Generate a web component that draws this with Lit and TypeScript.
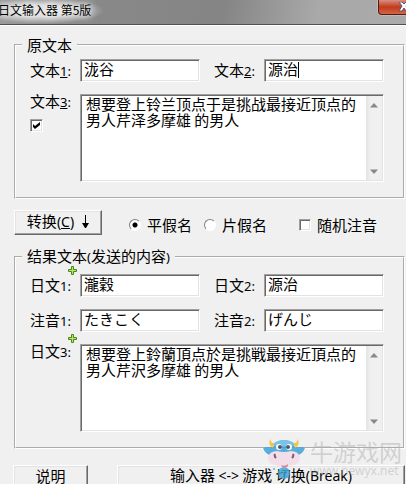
import { LitElement, html, css, svg, nothing } from "lit";
import { customElement, property } from "lit/decorators.js";

const CJK = css`"Noto Sans CJK SC", sans-serif`;

const controls = css`
  * { box-sizing: border-box; }
  .latin { font-family: "Noto Sans", ${CJK}; font-size: 13px; }
  .sunken {
    border: 1px solid;
    border-color: #a0a0a0 #fff #fff #a0a0a0;
    background: #fff;
    box-shadow: inset 1px 1px 0 #696969, inset -1px -1px 0 #e3e3e3;
  }
`;

@customElement("text-field")
class TextField extends LitElement {
  @property() name = "";
  @property() num = "";
  @property() value = "";
  @property({ type: Boolean }) access = false;
  @property({ type: Boolean }) plus = false;
  @property({ type: Boolean }) caret = false;
  @property({ type: Boolean }) multi = false;
  @property({ type: Boolean }) check = false;

  static styles = [controls, css`
    :host { display: flex; flex: 1; min-width: 0; align-items: flex-start; }
    .side { position: relative; width: 50px; flex: none; }
    label { display: block; line-height: 22px; white-space: nowrap; }
    .multi label { line-height: 14px; }
    .plus { position: absolute; left: 38px; top: -8px; width: 9px; height: 9px; }
    .multi .plus { top: -10px; }
    .box { position: relative; display: flex; flex: 1; min-width: 0; height: 23px; padding: 1px; }
    .box.tall { height: 88px; }
    input[type="text"], textarea {
      flex: 1; min-width: 0; width: 100%; margin: 0; border: 0; outline: 0; resize: none;
      background: transparent; color: #000; font: 15px/16px ${CJK};
    }
    input[type="text"] { padding: 0 2px; height: 16px; }
    textarea { padding: 0 4px; overflow: hidden; }
    .caret { position: absolute; left: 33px; top: 2px; width: 1px; height: 16px; background: #000; }
    .bar {
      display: flex; flex-direction: column; justify-content: space-between; align-items: center;
      width: 16px; padding: 7px 0 6px; background: linear-gradient(90deg, #e4e4e4, #f0f0f0 30%);
    }
    .arrow { display: block; width: 8px; height: 5px; }
    .check { appearance: none; display: block; width: 13px; height: 13px; margin: 10px 0 0; }
    .checkwrap { position: relative; display: block; }
    .tick { position: absolute; left: 3px; top: 3px; width: 7px; height: 7px; pointer-events: none; }
  `];

  render() {
    const text = html`${this.name}<span class="latin">${this.access ? html`<u>${this.num}</u>` : this.num}:</span>`;
    return html`
      <div class="side ${this.multi ? "multi" : ""}">
        <label for="value">${text}</label>
        ${this.plus ? html`<svg class="plus" viewBox="0 0 9 9"><path d="M3.5.5h2v3h3v2h-3v3h-2v-3h-3v-2h3z" fill="#b9e070" stroke="#498b12"/></svg>` : nothing}
        ${this.check ? html`<span class="checkwrap">
          <input class="check sunken" type="checkbox" aria-label="文本3" checked>
          <svg class="tick" viewBox="0 0 7 7"><path d="M0 2l2 2 5-4v3L2 7 0 5z"/></svg></span>` : nothing}
      </div>
      <div class="box sunken ${this.multi ? "tall" : ""}">
        ${this.multi
          ? html`<textarea id="value" .value=${this.value} spellcheck="false"></textarea>
            <div class="bar">
              <svg class="arrow" viewBox="0 0 8 5"><path d="M0 4.500L4 0l4 4.500z" fill="#888"/></svg>
              <svg class="arrow" viewBox="0 0 8 5"><path d="M0 .5h8L4 5z" fill="#888"/></svg>
            </div>`
          : html`<input id="value" type="text" .value=${this.value} spellcheck="false">`}
        ${this.caret ? html`<span class="caret"></span>` : nothing}
      </div>`;
  }
}

@customElement("site-mark")
class SiteMark extends LitElement {
  static styles = css`
    :host { display: flex; gap: 4px; pointer-events: none; }
    .cow { width: 44px; height: 42px; flex: none; opacity: .85; }
    .words { display: flex; flex-direction: column; font-family: ${CJK}; color: #b0b0b080; white-space: nowrap; }
    .name { font-size: 23px; line-height: 26px; }
    .url { font: 12px/14px "Noto Sans", sans-serif; }
  `;
  render() {
    return html`
      <svg class="cow" viewBox="0 0 44 42" aria-hidden="true">${svg`
        <path d="M8 1q1 4 5 5l-3 4Q6 6 8 1zM36 1q-1 4-5 5l3 4Q38 6 36 1z" fill="#f6c21c"/>
        <path d="M1 10q6-2 10 0Q14 2 22 2t11 8q5-2 10 0-3 8-10 7H11Q4 18 1 10z" fill="#3ba3db"/>
        <path d="M11 6q4-4 11-4t11 4q-5 4-11 2-6 2-11-2z" fill="#65bce6"/>
        <circle cx="17" cy="9" r="3" fill="#fff"/><circle cx="27" cy="9" r="3" fill="#fff"/>
        <circle cx="18" cy="9" r="2" fill="#354354"/><circle cx="26" cy="9" r="2" fill="#354354"/>
        <path d="M6 19q2-6 9-6 7 2 14 0 7 0 9 6 1 9-16 9T6 19z" fill="#f3dce8"/>
        <path d="M13 16q-1 2 1 4M31 16q1 2-1 4" fill="none" stroke="#684554" stroke-width="2"/>
        <path d="M19 27q4 2 7-1 0 4-3 3-3 1-4-2z" fill="#e96487"/>
        <circle cx="22" cy="35" r="6" fill="#43a5d8"/><circle cx="12" cy="31" r="1" fill="#43a5d8"/>
        <path d="M19 34q3 2 6 0M22 35v4" fill="none" stroke="#287eae"/>
      `}</svg>
      <div class="words"><span class="name">牛游戏网</span><span class="url">www.newyx.net</span></div>`;
  }
}

@customElement("app-root")
class AppRoot extends LitElement {
  static styles = [controls, css`
    :host {
      display: block; position: relative; height: 100vh; overflow: hidden;
      background: #f0f0f0; color: #000; font: 15px/16px ${CJK};
    }
    .title {
      display: flex; justify-content: space-between; height: 25px; overflow: hidden;
      border-bottom: 1px solid #505050; box-shadow: 0 1px #fff;
      background: linear-gradient(100deg, #999 0, #888 25%, #858585 55%, #a9a9a9 78%, #aaa);
    }
    h1 {
      margin: 0 0 0 -2px; padding: 0 14px 0 0; font: 12px/19px ${CJK}; white-space: nowrap;
      background: radial-gradient(ellipse at 42% 45%, #fffa 30%, #fff0 70%);
      text-shadow: 0 0 6px #fff, 0 0 10px #fff;
    }
    .close {
      width: 28px; height: 15px; padding: 0 0 0 18px; border: 1px solid #541b14; border-width: 0 0 1px 1px;
      border-radius: 0 0 0 4px; background: linear-gradient(#d79080, #c23a1c 50%, #d46544);
      box-shadow: 0 0 0 1px #ccc8; overflow: hidden;
    }
    .close svg { display: block; width: 12px; height: 10px; }
    main { padding: 12px 1px 0 14px; }
    fieldset { margin: 0; min-width: 0; padding: 6px 19px 15px 14px; border: 2px groove #fff; }
    legend { margin-left: -8px; padding: 0 5px; }
    .rows { display: flex; flex-direction: column; gap: 12px; }
    .row { display: flex; gap: 14px; }
    .results { padding: 9px 19px 15px 14px; }
    .button {
      height: 25px; padding: 0 0 2px; color: #000; font: 15px/16px ${CJK}; background: #f0f0f0; white-space: nowrap;
      border: 1px solid; border-color: #fff #696969 #696969 #fff; box-shadow: inset -1px -1px #a0a0a0, inset 1px 1px #e3e3e3;
    }
    .button .latin { font-size: 14px; }
    .options { display: flex; align-items: flex-start; margin: 11px 0 13px; }
    .convert { width: 88px; margin-right: 27px; }
    .down { width: 7px; height: 13px; margin-left: 8px; vertical-align: -1px; }
    .option { display: flex; align-items: center; gap: 6px; margin: 7px 12px 0 0; white-space: nowrap; }
    .option input { appearance: none; margin: 0; width: 12px; height: 12px; }
    .option input[type="radio"] {
      border: 1px solid; border-color: #808080 #fff #fff #808080; border-radius: 50%; background: #fff;
    }
    .option input[type="radio"]:checked { background: radial-gradient(circle, #000 2px, #fff 3px); }
    .random { margin-left: 20px; }
    .actions { display: flex; gap: 29px; margin: 16px 0 0 -1px; }
    .actions .button { padding-bottom: 4px; }
    .help { width: 75px; flex: none; }
    .switch { flex: 1; min-width: 0; }
    .mark { position: absolute; right: 4px; top: 438px; }
  `];

  render() {
    return html`
      <header class="title">
        <h1>日文输入器 第5版</h1>
        <button class="close" aria-label="关闭"><svg viewBox="0 0 12 10"><path d="M2 0h3l2 2 2-2h3L9 4l3 5H9L7 6 5 9H2l3-5z" fill="#fff" stroke="#555b70"/></svg></button>
      </header>
      <main>
        <fieldset>
          <legend>原文本</legend>
          <div class="rows">
            <div class="row">
              <text-field name="文本" num="1" value="泷谷" access></text-field>
              <text-field name="文本" num="2" value="源治" access caret></text-field>
            </div>
            <text-field name="文本" num="3" access multi check value="想要登上铃兰顶点于是挑战最接近顶点的男人芹泽多摩雄 的男人"></text-field>
          </div>
        </fieldset>
        <div class="options">
          <button class="button convert">转换<span class="latin">(<u>C</u>)</span><svg class="down" viewBox="0 0 7 13"><path d="M3 0h1v8h3L4 13H3L0 8h3z"/></svg></button>
          <label class="option"><input type="radio" name="kana" checked>平假名</label>
          <label class="option"><input type="radio" name="kana">片假名</label>
          <label class="option random"><input class="sunken" type="checkbox">随机注音</label>
        </div>
        <fieldset class="results">
          <legend>结果文本<span class="latin">(</span>发送的内容<span class="latin">)</span></legend>
          <div class="rows">
            <div class="row">
              <text-field name="日文" num="1" value="瀧穀" plus></text-field>
              <text-field name="日文" num="2" value="源治"></text-field>
            </div>
            <div class="row">
              <text-field name="注音" num="1" value="たきこく"></text-field>
              <text-field name="注音" num="2" value="げんじ"></text-field>
            </div>
            <text-field name="日文" num="3" plus multi value="想要登上鈴蘭頂点於是挑戦最接近頂点的男人芹沢多摩雄 的男人"></text-field>
          </div>
        </fieldset>
        <div class="actions">
          <button class="button help">说明</button>
          <button class="button switch">输入器 <span class="latin">&lt;-&gt;</span> 游戏 切换<span class="latin">(Break)</span></button>
        </div>
      </main>
      <site-mark class="mark"></site-mark>`;
  }
}
